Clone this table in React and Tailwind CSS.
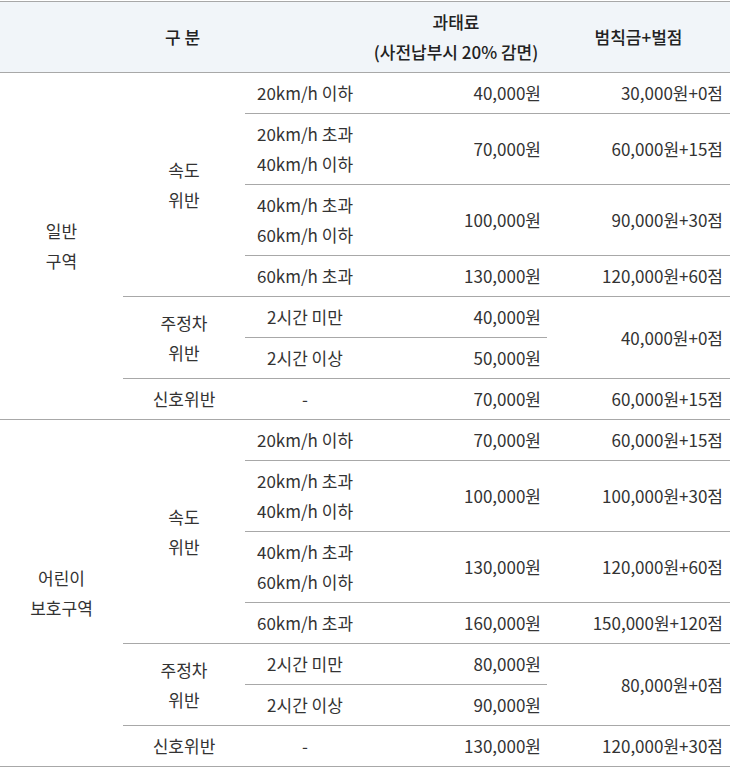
const regions = [
  {
    name: ['일반', '구역'],
    speed: [
      { cond: ['20km/h 이하'], fine: '40,000원', penalty: '30,000원+0점' },
      { cond: ['20km/h 초과', '40km/h 이하'], fine: '70,000원', penalty: '60,000원+15점' },
      { cond: ['40km/h 초과', '60km/h 이하'], fine: '100,000원', penalty: '90,000원+30점' },
      { cond: ['60km/h 초과'], fine: '130,000원', penalty: '120,000원+60점' },
    ],
    parking: { fines: ['40,000원', '50,000원'], penalty: '40,000원+0점' },
    signal: { fine: '70,000원', penalty: '60,000원+15점' },
  },
  {
    name: ['어린이', '보호구역'],
    speed: [
      { cond: ['20km/h 이하'], fine: '70,000원', penalty: '60,000원+15점' },
      { cond: ['20km/h 초과', '40km/h 이하'], fine: '100,000원', penalty: '100,000원+30점' },
      { cond: ['40km/h 초과', '60km/h 이하'], fine: '130,000원', penalty: '120,000원+60점' },
      { cond: ['60km/h 초과'], fine: '160,000원', penalty: '150,000원+120점' },
    ],
    parking: { fines: ['80,000원', '90,000원'], penalty: '80,000원+0점' },
    signal: { fine: '130,000원', penalty: '120,000원+30점' },
  },
]

const cell = 'border-b border-[#a8a8a8] px-0 py-[5px] align-middle leading-[30px]'
const center = `${cell} text-center`
const right4 = `${cell} text-right pr-[6px]`
const right5 = `${cell} text-right pr-[7px]`

function Lines({ items }) {
  return items.map((line) => <div key={line}>{line}</div>)
}

function RegionRows({ region }) {
  return (
    <>
      {region.speed.map((row, index) => (
        <tr key={row.cond.join()}>
          {index === 0 && (
            <>
              <td rowSpan={7} className={center}>
                <Lines items={region.name} />
              </td>
              <td rowSpan={4} className={center}>
                <div>속도</div>
                <div>위반</div>
              </td>
            </>
          )}
          <td className={center}>
            <Lines items={row.cond} />
          </td>
          <td className={right4}>{row.fine}</td>
          <td className={right5}>{row.penalty}</td>
        </tr>
      ))}
      <tr>
        <td rowSpan={2} className={center}>
          <div>주정차</div>
          <div>위반</div>
        </td>
        <td className={center}>2시간 미만</td>
        <td className={right4}>{region.parking.fines[0]}</td>
        <td rowSpan={2} className={right5}>
          {region.parking.penalty}
        </td>
      </tr>
      <tr>
        <td className={center}>2시간 이상</td>
        <td className={right4}>{region.parking.fines[1]}</td>
      </tr>
      <tr>
        <td className={center}>신호위반</td>
        <td className={center}>-</td>
        <td className={right4}>{region.signal.fine}</td>
        <td className={right5}>{region.signal.penalty}</td>
      </tr>
    </>
  )
}

export default function App() {
  return (
    <div
      className="w-[730px] bg-white pt-px text-[17px] text-[#333]"
      style={{ fontFamily: '"Noto Sans CJK KR", "Noto Sans", sans-serif' }}
    >
      <table className="w-full table-fixed border-collapse">
        <colgroup>
          <col className="w-[123px]" />
          <col className="w-[122px]" />
          <col className="w-[120px]" />
          <col className="w-[182px]" />
          <col className="w-[183px]" />
        </colgroup>
        <thead>
          <tr className="bg-[#f1f5f9] text-[#222]">
            <th colSpan={3} className="border-y border-[#a8a8a8] py-[5px] text-center font-medium leading-[30px]">
              구 분
            </th>
            <th className="border-y border-[#a8a8a8] py-[5px] text-center font-medium leading-[30px]">
              <div>과태료</div>
              <div>(사전납부시 20% 감면)</div>
            </th>
            <th className="border-y border-[#a8a8a8] py-[5px] text-center font-medium leading-[30px]">
              범칙금+벌점
            </th>
          </tr>
        </thead>
        <tbody>
          {regions.map((region) => (
            <RegionRows key={region.name.join()} region={region} />
          ))}
        </tbody>
      </table>
    </div>
  )
}
